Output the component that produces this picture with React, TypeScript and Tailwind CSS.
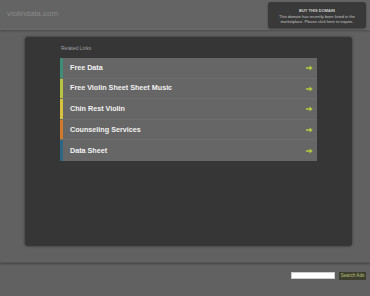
const links = [
  { label: "Free Data", bar: "bg-[#3f8c78]" },
  { label: "Free Violin Sheet Sheet Music", bar: "bg-[#b9c540]" },
  { label: "Chin Rest Violin", bar: "bg-[#d6c23c]" },
  { label: "Counseling Services", bar: "bg-[#d07a2c]" },
  { label: "Data Sheet", bar: "bg-[#2e6684]" },
];

function Arrow() {
  return (
    <svg width="7" height="6" viewBox="0 0 7 6" className="shrink-0">
      <path d="M0 2.2h3.6V0.4L6.6 3 3.6 5.6V3.8H0z" fill="#b4cf3c" />
    </svg>
  );
}

export default function App() {
  return (
    <div
      className="w-[370px] h-[296px] bg-[#616161] flex flex-col overflow-hidden"
      style={{ fontFamily: '"Liberation Sans", Arial, sans-serif' }}
    >
      {/* header */}
      <div className="h-[30px] flex items-start justify-between bg-[#646464] border-b border-[#6c6c6c] shadow-[0_1px_2px_rgba(0,0,0,0.25)]">
        <div className="pl-[7px] pt-[8px] text-[8px] text-[#8a8a8a]">violindata.com</div>
        <div className="mt-[2px] mr-[4px] w-[98px] h-[26px] rounded-[3px] bg-[#393939] shadow-[0_1px_2px_rgba(0,0,0,0.4)] flex flex-col items-center pt-[6px] text-[#d0d0d0] leading-[5px]">
          <div className="text-[4px] font-bold">BUY THIS DOMAIN</div>
          <div className="text-[4px] mt-[1px] leading-[5px] text-center text-[#c4c4c4]">
            This domain has recently been listed in the
            <br />
            marketplace. Please click here to inquire.
          </div>
        </div>
      </div>

      {/* main */}
      <div className="h-[233px] pt-[7px] pl-[25px] pr-[18px] flex flex-col border-b border-[#555] shadow-[0_1px_2px_rgba(0,0,0,0.3)]">
        <div className="h-[209px] rounded-[3px] bg-[#363636] shadow-[0_0_3px_rgba(0,0,0,0.5)] pl-[35px] pr-[35px] pt-[8px]">
          <div className="text-[5px] text-[#a0a0a0] pl-[1px] h-[13px]">Related Links</div>
          <div className="flex flex-col">
            {links.map((l) => (
              <div
                key={l.label}
                className="h-[20.6px] flex items-stretch bg-[#666666] border-b border-[#6e6e6e] last:border-b-0"
              >
                <div className={`w-[3px] ${l.bar}`} />
                <div className="flex-1 flex items-center justify-between pl-[7px] pr-[4px] pt-[1px]">
                  <span className="text-[7.2px] font-bold text-[#f2f2f2]">{l.label}</span>
                  <Arrow />
                </div>
              </div>
            ))}
          </div>
        </div>
      </div>

      {/* footer */}
      <div className="flex justify-end items-start pt-[9px] pr-[4px] gap-[4px]">
        <div className="w-[44px] h-[7px] bg-white border border-[#ccc]" />
        <div className="w-[27px] h-[8px] bg-[#3d3e2e] text-[4.6px] leading-[8px] text-center text-[#b6c07a]">Search Ads</div>
      </div>
    </div>
  );
}
